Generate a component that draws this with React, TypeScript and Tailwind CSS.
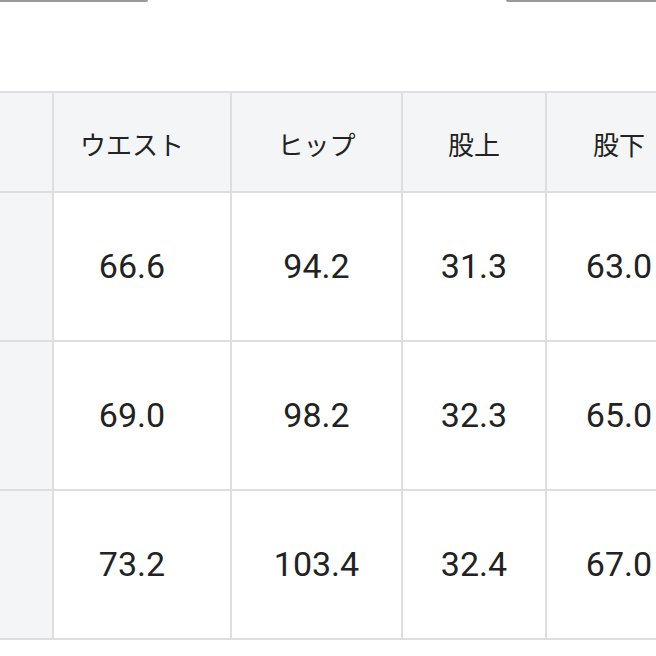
import React from "react";

const header = ["", "ウエスト", "ヒップ", "股上", "股下"];
const rows = [
  ["66.6", "94.2", "31.3", "63.0"],
  ["69.0", "98.2", "32.3", "65.0"],
  ["73.2", "103.4", "32.4", "67.0"],
];

export default function App() {
  return (
    <div className="w-[656px] h-[656px] bg-white overflow-hidden relative">
      <div className="flex justify-between h-[3px]">
        <div className="w-[148px] h-[2px] bg-[#9a9a9a] rounded-br-[2px]" />
        <div className="w-[150px] h-[2px] bg-[#9a9a9a] rounded-bl-[2px]" />
      </div>
      <div className="mt-[88px] w-[692px] border-t-2 border-[#dcdee0] grid grid-cols-[54px_178px_171px_144px_146px]">
        {header.map((h, i) => (
          <div
            key={i}
            className={`h-[100px] pt-[2px] border-r-2 border-b-2 border-[#dcdee0] bg-[#f4f5f6] flex items-center justify-center text-[26px] text-[#222] [font-family:'Noto_Sans_CJK_JP',sans-serif] ${i === 1 ? "pr-[20px]" : ""}`}
          >
            {h}
          </div>
        ))}
        {rows.map((r, ri) => (
          <React.Fragment key={ri}>
            <div className="h-[149px] border-r-2 border-b-2 border-[#dcdee0] bg-[#f4f5f6]" />
            {r.map((v, ci) => (
              <div
                key={ci}
                className={`h-[149px] border-r-2 border-b-2 border-[#dcdee0] bg-white flex items-center justify-center text-[34px] text-[#222] [font-family:Roboto,sans-serif] ${ci === 0 ? "pr-[20px]" : ""}`}
              >
                {v}
              </div>
            ))}
          </React.Fragment>
        ))}
      </div>
    </div>
  );
}
